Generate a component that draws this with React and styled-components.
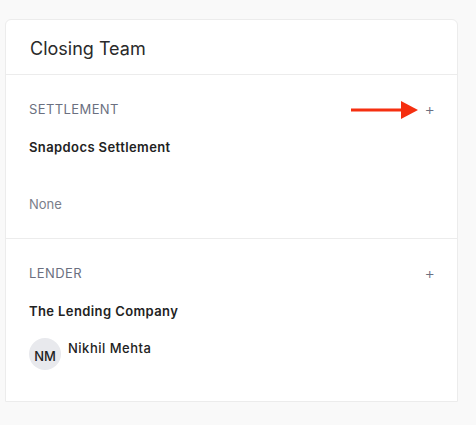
import React from "react";
import styled, { createGlobalStyle } from "styled-components";

const GlobalStyle = createGlobalStyle`
  body {
    margin: 0;
    background: #f9f9f9;
    font-family: Inter, "Noto Sans", sans-serif;
    color: #1f2023;
  }
`;

const Page = styled.div`
  padding: 19px 18px 23px 5px;
`;

const Card = styled.div`
  background: #fff;
  border: 1px solid #ececec;
  border-radius: 6px 6px 0 0;
  width: 451px;
`;

const Header = styled.div`
  height: 54px;
  padding: 0 24px;
  display: flex;
  align-items: center;
  border-bottom: 1px solid #ececec;
`;

const Title = styled.h2`
  margin: 0;
  font-size: 18px;
  font-weight: 400;
  color: #2a2a2a;
  padding-top: 2px;
`;

const Section = styled.div`
  padding: 24px 22px ${(p) => p.$bottom || 24}px 23px;
  border-bottom: ${(p) => (p.$last ? "none" : "1px solid #ececec")};
`;

const LabelRow = styled.div`
  position: relative;
  display: flex;
  align-items: center;
  justify-content: space-between;
  height: 20px;
`;

const Label = styled.span`
  font-size: 13px;
  letter-spacing: 0.4px;
  color: #6b7080;
  text-transform: uppercase;
`;

const AddButton = styled.button`
  border: none;
  background: none;
  padding: 0;
  font-family: inherit;
  font-size: 16px;
  font-weight: 300;
  color: #6b7080;
  line-height: 20px;
  cursor: pointer;
`;

const Arrow = styled.svg`
  position: absolute;
  right: 14px;
  top: 1px;
`;

const Org = styled.div`
  margin-top: 18px;
  font-size: 13px;
  font-weight: 600;
  letter-spacing: 0.4px;
  line-height: 20px;
  color: #222;
`;

const Empty = styled.div`
  margin-top: 37px;
  font-size: 13px;
  line-height: 20px;
  color: #7a7e8a;
`;

const Member = styled.div`
  display: flex;
  align-items: flex-start;
  gap: 7px;
  margin-top: 17px;
`;

const Avatar = styled.div`
  width: 32px;
  height: 32px;
  border-radius: 50%;
  background: #e8e9ed;
  display: flex;
  align-items: center;
  justify-content: center;
  font-size: 13px;
  font-weight: 500;
  color: #222;
  padding-top: 3px;
  box-sizing: border-box;
`;

const Name = styled.span`
  font-size: 13px;
  font-weight: 500;
  letter-spacing: 0.5px;
  line-height: 20px;
  color: #222;
`;

export default function App() {
  return (
    <>
      <GlobalStyle />
      <Page>
        <Card>
          <Header>
            <Title>Closing Team</Title>
          </Header>
          <Section>
            <LabelRow>
              <Label>Settlement</Label>
              <Arrow width="70" height="20" viewBox="0 0 70 20">
                <rect x="0" y="8.5" width="52" height="3" fill="#f52f10" />
                <polygon points="50,1 67,10 50,19" fill="#f52f10" />
              </Arrow>
              <AddButton>+</AddButton>
            </LabelRow>
            <Org>Snapdocs Settlement</Org>
            <Empty>None</Empty>
          </Section>
          <Section $last $bottom={31}>
            <LabelRow>
              <Label>Lender</Label>
              <AddButton>+</AddButton>
            </LabelRow>
            <Org>The Lending Company</Org>
            <Member>
              <Avatar>NM</Avatar>
              <Name>Nikhil Mehta</Name>
            </Member>
          </Section>
        </Card>
      </Page>
    </>
  );
}
